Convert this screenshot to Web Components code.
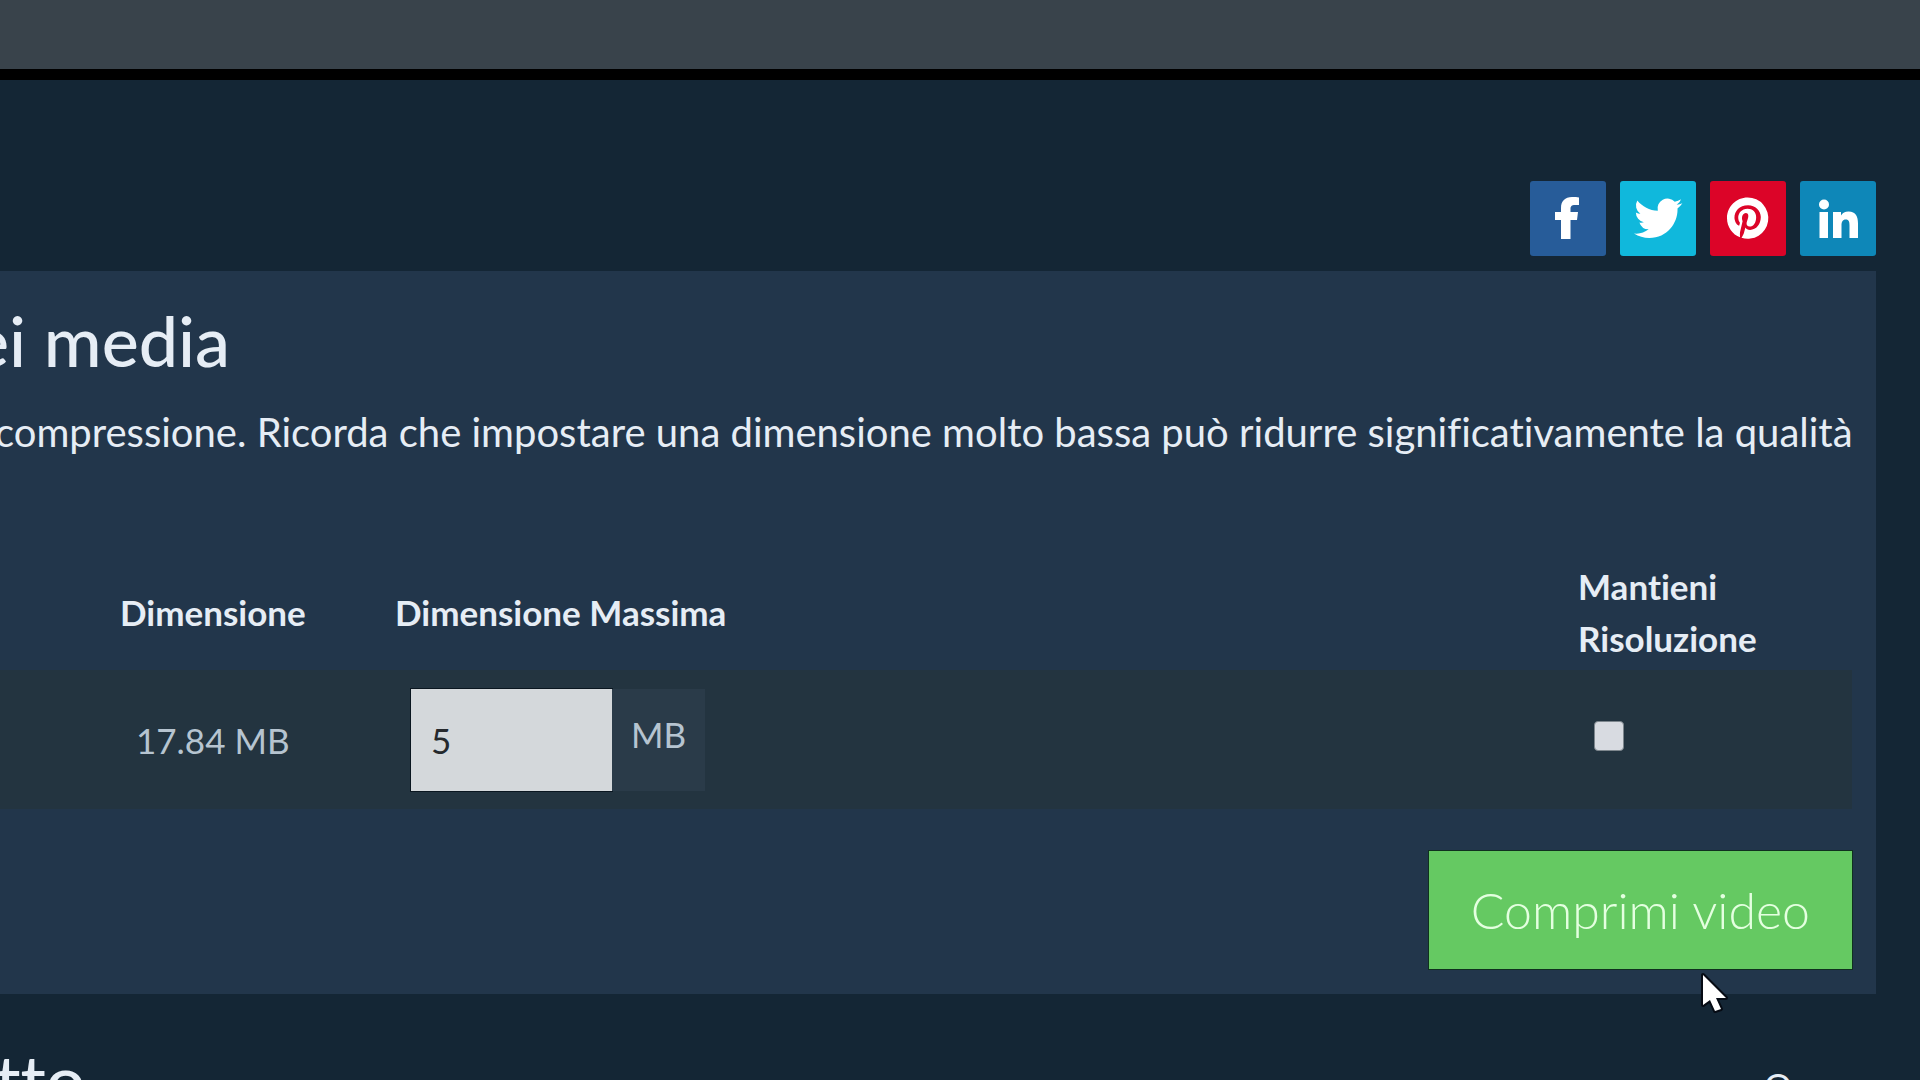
<!DOCTYPE html>
<html lang="it">
<head>
<meta charset="UTF-8">
<meta name="viewport" content="width=device-width, initial-scale=1">
<title>Comprimi video</title>
<style>
html, body {
  height: 100%;
}

body {
  margin: 0;
  overflow: hidden;
  background: #142635;
  color: #e6edf5;
  font-family: Lato, "Liberation Sans", sans-serif;
  font-size: 35px;
  font-variant-ligatures: none;
}
</style>
</head>
<body>
<compress-page></compress-page>

<script>
const define = (name, html) => {
  const template = document.createElement("template");
  template.innerHTML = html;

  window.customElements.define(
    name,
    class extends HTMLElement {
      constructor() {
        super()
          .attachShadow({ mode: "open" })
          .appendChild(template.content.cloneNode(true));
      }
    }
  );
};

define("top-bar", `
<style>
:host {
  display: block;
  height: 69px;
  background: #39434b;
  border-bottom: 11px solid #000;
}
</style>
`);

define("share-links", `
<style>
:host {
  display: flex;
  justify-content: flex-end;
  gap: 14px;
}

a {
  display: block;
  width: 76px;
  height: 75px;
  border-radius: 3px;
  color: #fff;
}

svg {
  display: block;
  width: 76px;
  height: 75px;
}

.facebook { background: #275c99; }
.twitter { background: #10b8dc; }
.pinterest { background: #dc0428; }
.linkedin { background: #0e87b8; }
</style>

<a class="facebook" href="#" aria-label="Facebook">
  <svg viewBox="0 0 76 75" fill="currentColor"><path d="M31 58V39h-6v-8h6v-4c0-7 4-11 11-11 3 0 5 0 7 .5V24h-4c-3.500 0-4.500 1.500-4.500 4v3H48l-1 8h-6.500v19z"/></svg>
</a>
<a class="twitter" href="#" aria-label="Twitter">
  <svg viewBox="0 0 76 75" fill="currentColor"><path transform="translate(14 13) scale(2.020)" d="M23.950 4.570a10 10 0 0 1-2.820.77 4.960 4.960 0 0 0 2.160-2.720c-.95.560-2 .960-3.120 1.190a4.920 4.920 0 0 0-8.390 4.480C7.690 8.090 4.070 6.130 1.640 3.160a4.920 4.920 0 0 0 1.520 6.570 4.900 4.900 0 0 1-2.230-.61v.06a4.920 4.920 0 0 0 3.950 4.830 5 5 0 0 1-2.210.08 4.940 4.940 0 0 0 4.600 3.420A9.870 9.870 0 0 1 0 19.540a14 14 0 0 0 7.550 2.210c9.050 0 14-7.500 14-13.980 0-.21 0-.42-.02-.63a9.940 9.940 0 0 0 2.420-2.570z"/></svg>
</a>
<a class="pinterest" href="#" aria-label="Pinterest">
  <svg viewBox="0 0 76 75" fill="currentColor"><path transform="translate(17 16.500) scale(1.720)" d="M12 0C5.370 0 0 5.370 0 12c0 5.080 3.160 9.420 7.620 11.160-.1-.95-.2-2.400.04-3.440l1.410-5.960s-.36-.72-.36-1.780c0-1.670.97-2.910 2.170-2.910 1.020 0 1.520.77 1.520 1.690 0 1.030-.66 2.570-1 3.990-.28 1.190.6 2.170 1.780 2.170 2.130 0 3.770-2.250 3.770-5.490 0-2.870-2.060-4.880-5.010-4.880-3.410 0-5.410 2.560-5.410 5.200 0 1.030.39 2.140.89 2.740.1.120.11.220.08.340l-.33 1.360c-.05.220-.17.270-.4.160-1.500-.69-2.430-2.880-2.430-4.650 0-3.780 2.750-7.250 7.920-7.250 4.160 0 7.390 2.970 7.390 6.920 0 4.140-2.610 7.460-6.230 7.460-1.220 0-2.360-.63-2.750-1.380l-.75 2.850c-.27 1.050-1 2.350-1.490 3.150A12 12 0 1 0 12 0z"/></svg>
</a>
<a class="linkedin" href="#" aria-label="LinkedIn">
  <svg viewBox="0 0 76 75" fill="currentColor"><circle cx="24" cy="23.500" r="5"/><path d="M19.500 31h8.500v26h-8.500zM33 31h8v3.500c1.500-2.500 4-4 7.500-4 7.500 0 9.500 5 9.500 12v14.500h-8.500V44.500c0-3.500-.5-6-3.700-6-3.300 0-4.300 2.500-4.300 6V57H33z"/></svg>
</a>
`);

// Size field with its unit glued to the right
define("size-field", `
<style>
:host {
  display: flex;
  height: 102px;
}

input {
  box-sizing: border-box;
  width: 201px;
  padding: 0 20px;
  border: 0;
  border-radius: 0;
  outline: 1px solid #0a1620;
  background: #d4d8db;
  color: #25292d;
  font: inherit;
}

label {
  width: 93px;
  background: #2a3b49;
  color: #b6c4d0;
  line-height: 90px;
  text-align: center;
}
</style>

<input id="size" type="text" inputmode="numeric" value="5">
<label for="size"><slot></slot></label>
`);

define("media-table", `
<style>
:host {
  display: block;
}

table {
  width: 100%;
  border-collapse: collapse;
  table-layout: fixed;
}

th {
  height: 104px;
  padding: 0 0 6px;
  font-weight: 700;
  line-height: 52px;
  text-align: left;
}

td {
  height: 139px;
  padding: 0 0 0 16px;
  background: #233440;
  color: #b6c4d0;
}

.size { width: 275px; }
.keep { width: 274px; }

input {
  appearance: none;
  display: block;
  box-sizing: border-box;
  width: 30px;
  height: 30px;
  margin: 0 0 8px;
  border: 1px solid #7d868d;
  border-radius: 4px;
  background: #d8dbe1;
}

input:checked {
  background: #65c962;
}
</style>

<table>
  <thead>
    <tr>
      <th class="size" scope="col">Dimensione</th>
      <th scope="col">Dimensione Massima</th>
      <th class="keep" scope="col"><label for="keep">Mantieni<br>Risoluzione</label></th>
    </tr>
  </thead>
  <tbody>
    <tr>
      <td>17.84 MB</td>
      <td><size-field>MB</size-field></td>
      <td><input id="keep" type="checkbox"></td>
    </tr>
  </tbody>
</table>
`);

define("main-button", `
<style>
:host {
  display: block;
}

button {
  height: 118px;
  padding: 0 42px;
  border: 0;
  outline: 1px solid #10301f;
  background: #65c962;
  color: #e4ffe0;
  font: inherit;
  font-size: 50px;
  font-weight: 300;
  cursor: pointer;
}
</style>

<button type="button"><slot></slot></button>
`);

define("media-panel", `
<style>
:host {
  display: block;
  padding: 29px 24px 25px 0;
  background: #22364b;
}

h2 {
  margin: 0 0 22px -28px;
  font-size: 70px;
  font-weight: 500;
  line-height: 80px;
}

p {
  margin: 0 0 0 -5px;
  font-size: 40px;
  line-height: 60px;
  white-space: nowrap;
}

.actions {
  display: flex;
  justify-content: flex-end;
  margin-top: 42px;
}
</style>

<h2><slot name="title"></slot></h2>
<p><slot name="text"></slot></p>
<slot></slot>
<div class="actions"><slot name="action"></slot></div>
`);

define("mouse-pointer", `
<style>
:host {
  position: absolute;
  left: 1699px;
  top: 970px;
  pointer-events: none;
}

svg {
  display: block;
}
</style>

<svg width="32" height="46" viewBox="0 0 32 46"><path d="M4 5v30l7-5 5 11 6-2-5-11h10z" fill="#fff" stroke="#060b14" stroke-width="4" stroke-linejoin="round" paint-order="stroke"/></svg>
`);

define("compress-page", `
<style>
:host {
  display: block;
}

main {
  padding: 101px 44px 0 0;
}

media-panel {
  margin-top: 15px;
}

/* the row's shade runs on past the first column to the window's edge */
media-table {
  margin-top: 98px;
  padding-left: 120px;
  background: linear-gradient(#233440, #233440) left bottom / 100% 139px no-repeat;
}

footer {
  display: flex;
  justify-content: space-between;
  margin-top: 45px;
  padding-right: 84px;
}

h2 {
  margin: 0 0 0 -44px;
  font-size: 70px;
  font-weight: 500;
  line-height: 80px;
  white-space: nowrap;
}

footer span {
  padding-top: 24px;
  line-height: 44px;
}
</style>

<top-bar></top-bar>
<main>
  <share-links></share-links>
  <media-panel>
    <span slot="title">ei media</span>
    <span slot="text">compressione. Ricorda che impostare una dimensione molto bassa può ridurre significativamente la qualità</span>
    <media-table></media-table>
    <main-button slot="action">Comprimi video</main-button>
  </media-panel>
  <footer>
    <h2>otto</h2>
    <span>O</span>
  </footer>
</main>
<mouse-pointer></mouse-pointer>
`);
</script>
</body>
</html>
